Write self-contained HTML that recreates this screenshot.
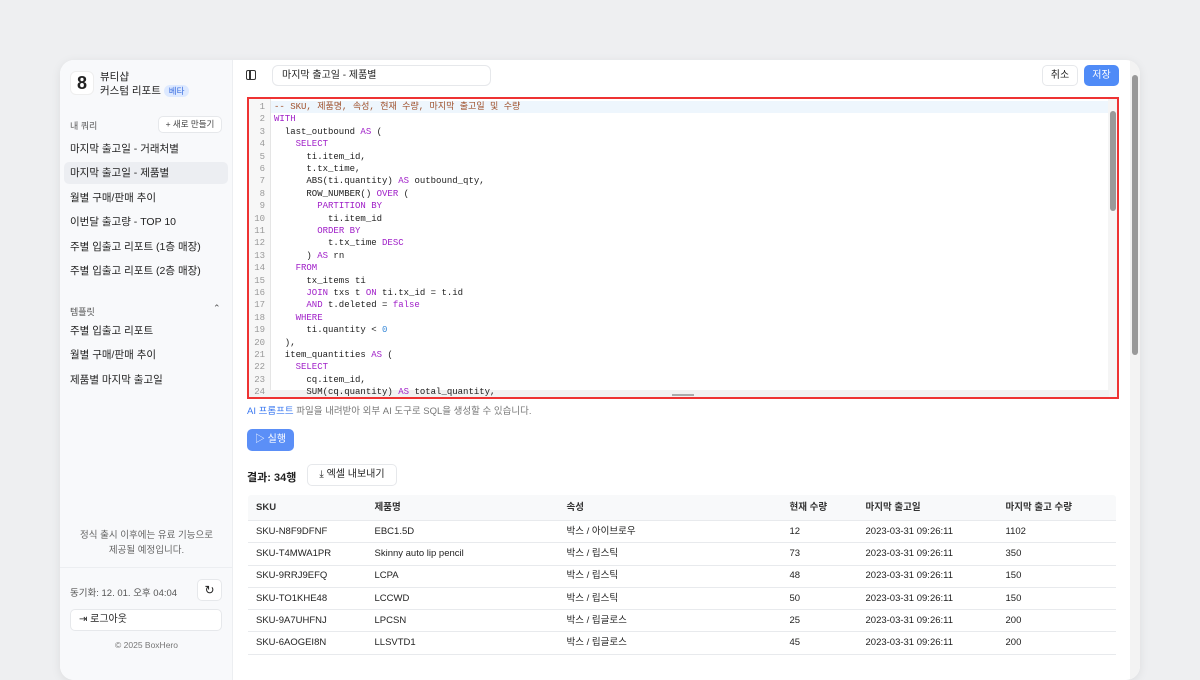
<!DOCTYPE html>
<html><head><meta charset="utf-8"><style>
*{box-sizing:border-box;margin:0;padding:0}
body{width:1200px;height:661px;overflow:hidden;background:#eeeff1;font-family:"Liberation Sans","Noto Sans CJK KR",sans-serif;color:#222;position:relative}
.win{position:absolute;left:60px;top:60px;width:1080px;height:620px;background:#fff;border-radius:14px;overflow:hidden;box-shadow:0 2px 10px rgba(0,0,0,.08)}
.side{position:absolute;left:0;top:0;width:173px;height:620px;background:#f8f9fb;border-right:1px solid #eceef1}
.abs{position:absolute}
.nav{position:absolute;left:4px;width:164px;height:22px;font-size:10.5px;line-height:22px;padding-left:6px;color:#222;border-radius:5px}
.mono{font-family:"Liberation Mono","DejaVu Sans Mono","Noto Sans CJK KR",monospace}
.code{position:absolute;left:187px;top:37px;width:872px;height:302px;border:2px solid #e33;background:#fff;overflow:hidden}
.gut{position:absolute;left:0;top:0;width:22px;height:300px;background:#f7f7f7;border-right:1px solid #e5e5e5}
.ln{position:absolute;left:0;width:20px;text-align:right;font-size:9px;color:#999;padding-right:4px;line-height:12px}
.cl{position:absolute;left:25px;font-size:9px;white-space:pre;color:#222;line-height:12px}
.k{color:#a020c8}.c{color:#a0522d}.n{color:#3a8ad8}
table{border-collapse:collapse;font-size:9.5px}
.tb{position:absolute;left:187px;top:434px;width:870px;border:1px solid #e3e5e8;border-radius:4px;overflow:hidden}
.tb td,.tb th{height:22.3px;line-height:12px;padding-left:8px;text-align:left;border-bottom:1px solid #e8eaed;white-space:nowrap}
.tb th{height:26px;background:#f8f9fa;font-weight:bold;font-size:9.5px;color:#333}
</style></head><body>
<div class="win">
<div class="side">
 <div class="abs" style="left:10px;top:11px;width:24px;height:24px;border-radius:6px;background:#fff;border:1px solid #eee;font-size:18px;font-weight:bold;line-height:22px;text-align:center;color:#222">8</div>
 <div class="abs" style="left:40px;top:10px;font-size:10.5px;line-height:14px">뷰티샵<br>커스텀 리포트 <span style="background:#dde9ff;color:#3b6fe0;font-size:8.5px;padding:1px 5px;border-radius:8px">베타</span></div>
 <div class="abs" style="left:10px;top:59px;font-size:9px;color:#555">내 쿼리</div>
 <div class="abs" style="left:98px;top:56px;width:64px;height:17px;background:#fff;border:1px solid #e6e8eb;border-radius:5px;font-size:8.5px;color:#444;text-align:center;line-height:15px">+ 새로 만들기</div>
 <div class="nav" style="top:78px">마지막 출고일 - 거래처별</div>
 <div class="nav" style="top:102px;background:#eceef2">마지막 출고일 - 제품별</div>
 <div class="nav" style="top:127px">월별 구매/판매 추이</div>
 <div class="nav" style="top:151px">이번달 출고량 - TOP 10</div>
 <div class="nav" style="top:176px">주별 입출고 리포트 (1층 매장)</div>
 <div class="nav" style="top:200px">주별 입출고 리포트 (2층 매장)</div>
 <div class="abs" style="left:10px;top:245px;font-size:9px;color:#555">템플릿</div>
 <div class="abs" style="left:153px;top:243px;font-size:9px;color:#555">⌃</div>
 <div class="nav" style="top:260px">주별 입출고 리포트</div>
 <div class="nav" style="top:284px">월별 구매/판매 추이</div>
 <div class="nav" style="top:309px">제품별 마지막 출고일</div>
 <div class="abs" style="left:0;top:468px;width:173px;text-align:center;font-size:9.5px;line-height:15px;color:#666">정식 출시 이후에는 유료 기능으로<br>제공될 예정입니다.</div>
 <div class="abs" style="left:0;top:507px;width:173px;border-top:1px solid #eceef1"></div>
 <div class="abs" style="left:10px;top:525px;font-size:9.5px;color:#555">동기화: 12. 01. 오후 04:04</div>
 <div class="abs" style="left:137px;top:519px;width:25px;height:22px;background:#fff;border:1px solid #e6e8eb;border-radius:5px;text-align:center;font-size:12px;line-height:20px">↻</div>
 <div class="abs" style="left:10px;top:549px;width:152px;height:22px;background:#fff;border:1px solid #e6e8eb;border-radius:5px;font-size:10px;line-height:20px;padding-left:8px">⇥ 로그아웃</div>
 <div class="abs" style="left:0;top:580px;width:173px;text-align:center;font-size:8.5px;color:#777">© 2025 BoxHero</div>
</div>
<div class="abs" style="left:186px;top:10px;width:10px;height:10px;border:1.5px solid #333;border-radius:2px"></div>
<div class="abs" style="left:189px;top:10px;width:1.5px;height:10px;background:#333"></div>
<div class="abs" style="left:212px;top:5px;width:219px;height:21px;border:1px solid #e6e8eb;border-radius:6px;font-size:10px;line-height:19px;padding-left:9px">마지막 출고일 - 제품별</div>
<div class="abs" style="left:982px;top:5px;width:36px;height:21px;border:1px solid #e6e8eb;border-radius:5px;font-size:10px;line-height:19px;text-align:center">취소</div>
<div class="abs" style="left:1024px;top:5px;width:35px;height:21px;background:#4f8bf7;border-radius:5px;font-size:10px;line-height:21px;text-align:center;color:#fff">저장</div>
<div class="code mono">
 <div class="abs" style="left:0;top:2px;width:860px;height:12px;background:#eef6fd"></div>
 <div class="gut"></div>
 <div class="abs" style="left:859px;top:0;width:11px;height:300px;background:#f5f5f5"></div>
 <div class="abs" style="left:861px;top:12px;width:6px;height:100px;background:#999;border-radius:3px"></div>
 <div class="abs" style="left:0;top:291px;width:860px;height:9px;background:#f2f2f2"></div>
 <div class="abs" style="left:423px;top:295px;width:22px;height:2px;background:#aaa"></div>
 <div id="lines"></div>
</div>
<div class="abs" style="left:187px;top:343px;font-size:9.5px;color:#777"><span style="color:#3b78f0">AI 프롬프트</span> 파일을 내려받아 외부 AI 도구로 SQL을 생성할 수 있습니다.</div>
<div class="abs" style="left:187px;top:369px;width:47px;height:22px;background:#5b8ff7;border-radius:5px;font-size:10px;line-height:22px;text-align:center;color:#fff">▷ 실행</div>
<div class="abs" style="left:187px;top:409px;font-size:11px;font-weight:bold">결과: 34행</div>
<div class="abs" style="left:247px;top:404px;width:90px;height:22px;border:1px solid #e6e8eb;border-radius:5px;font-size:10px;line-height:20px;text-align:center">⤓ 엑셀 내보내기</div>
<table class="tb">
<tr><th style="width:119px">SKU</th><th style="width:192px">제품명</th><th style="width:223px">속성</th><th style="width:76px">현재 수량</th><th style="width:140px">마지막 출고일</th><th>마지막 출고 수량</th></tr>
<tr><td>SKU-N8F9DFNF</td><td>EBC1.5D</td><td>박스 / 아이브로우</td><td>12</td><td>2023-03-31 09:26:11</td><td>1102</td></tr>
<tr><td>SKU-T4MWA1PR</td><td>Skinny auto lip pencil</td><td>박스 / 립스틱</td><td>73</td><td>2023-03-31 09:26:11</td><td>350</td></tr>
<tr><td>SKU-9RRJ9EFQ</td><td>LCPA</td><td>박스 / 립스틱</td><td>48</td><td>2023-03-31 09:26:11</td><td>150</td></tr>
<tr><td>SKU-TO1KHE48</td><td>LCCWD</td><td>박스 / 립스틱</td><td>50</td><td>2023-03-31 09:26:11</td><td>150</td></tr>
<tr><td>SKU-9A7UHFNJ</td><td>LPCSN</td><td>박스 / 립글로스</td><td>25</td><td>2023-03-31 09:26:11</td><td>200</td></tr>
<tr><td>SKU-6AOGEI8N</td><td>LLSVTD1</td><td>박스 / 립글로스</td><td>45</td><td>2023-03-31 09:26:11</td><td>200</td></tr>
<tr><td>&nbsp;</td><td></td><td></td><td></td><td></td><td></td></tr>
</table>
<div class="abs" style="left:1070px;top:0;width:10px;height:620px;background:#f3f3f3"></div>
<div class="abs" style="left:1072px;top:15px;width:6px;height:280px;background:#999;border-radius:3px"></div>
</div>
<script>
var L=[
'<span class="c">-- SKU, 제품명, 속성, 현재 수량, 마지막 출고일 및 수량</span>',
'<span class="k">WITH</span>',
'  last_outbound <span class="k">AS</span> (',
'    <span class="k">SELECT</span>',
'      ti.item_id,',
'      t.tx_time,',
'      ABS(ti.quantity) <span class="k">AS</span> outbound_qty,',
'      ROW_NUMBER() <span class="k">OVER</span> (',
'        <span class="k">PARTITION BY</span>',
'          ti.item_id',
'        <span class="k">ORDER BY</span>',
'          t.tx_time <span class="k">DESC</span>',
'      ) <span class="k">AS</span> rn',
'    <span class="k">FROM</span>',
'      tx_items ti',
'      <span class="k">JOIN</span> txs t <span class="k">ON</span> ti.tx_id = t.id',
'      <span class="k">AND</span> t.deleted = <span class="k">false</span>',
'    <span class="k">WHERE</span>',
'      ti.quantity &lt; <span class="n">0</span>',
'  ),',
'  item_quantities <span class="k">AS</span> (',
'    <span class="k">SELECT</span>',
'      cq.item_id,',
'      SUM(cq.quantity) <span class="k">AS</span> total_quantity,'];
var h='';for(var i=0;i<L.length;i++){var t=2+i*12.4;h+='<div class="ln" style="top:'+t+'px">'+(i+1)+'</div><div class="cl" style="top:'+t+'px">'+L[i]+'</div>';}
document.getElementById('lines').innerHTML=h;
</script>
</body></html>
